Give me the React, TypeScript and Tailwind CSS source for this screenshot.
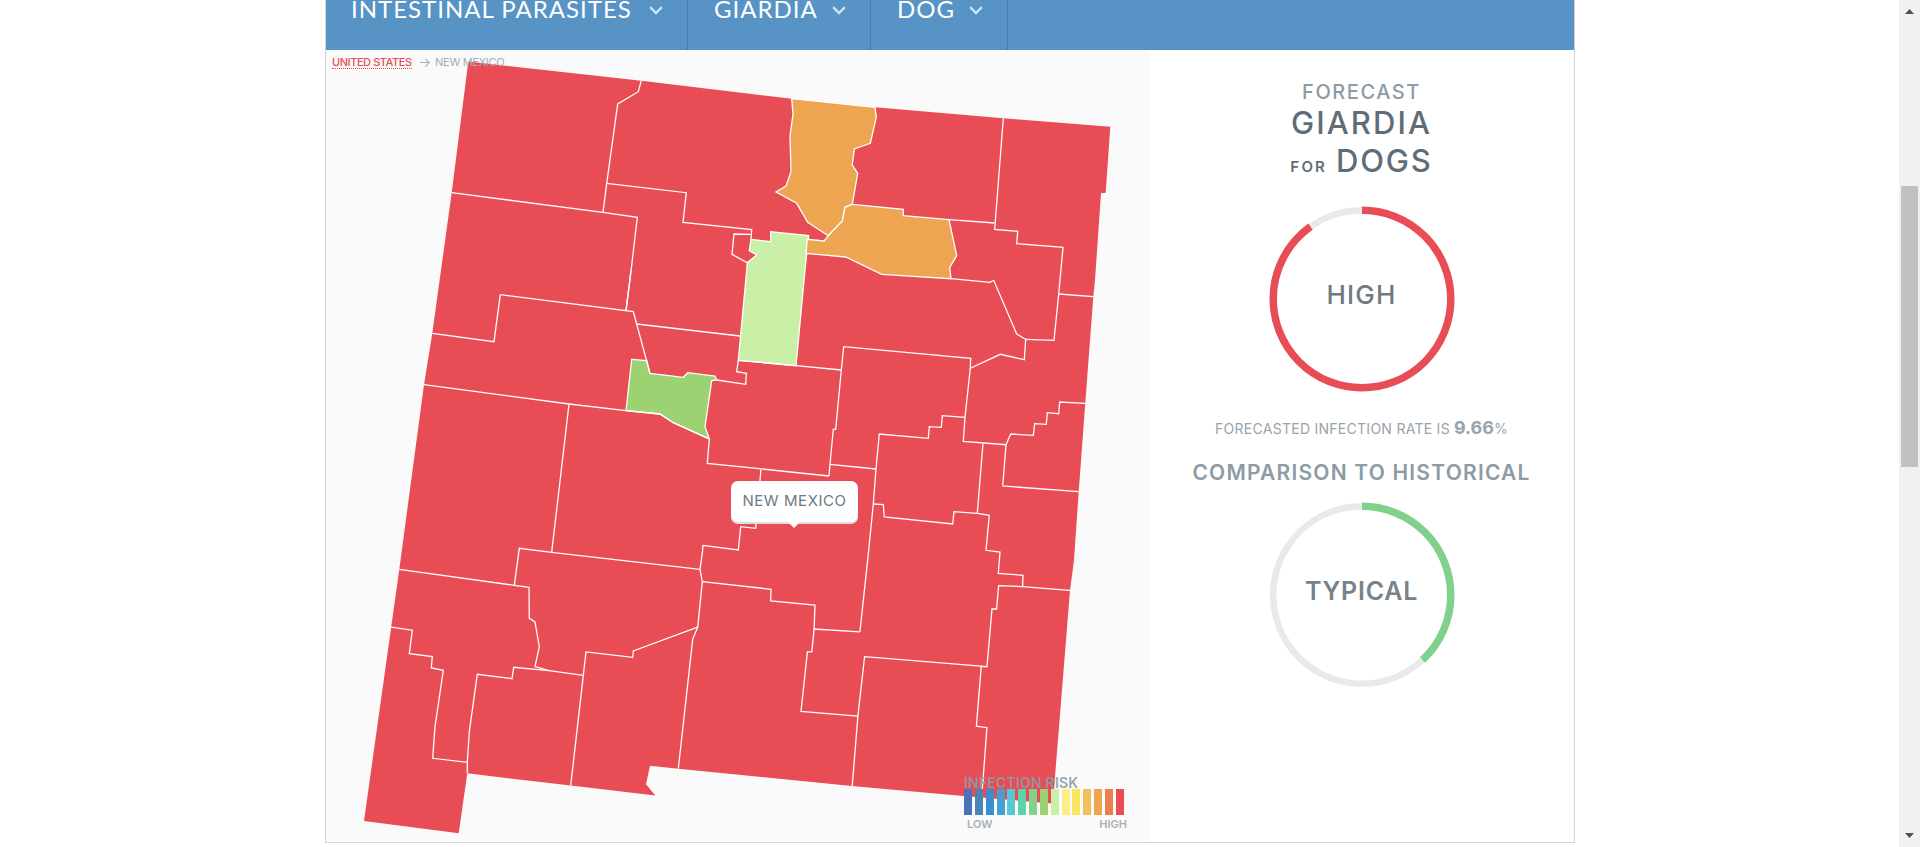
const MONT = "font-['Inter','Liberation_Sans',sans-serif]";

const fix = (s: string) =>
  s
    .split(" ")
    .map((p) => {
      const [x, y] = p.split(",").map(Number);
      return `${x},${y > 550 ? 550 + (y - 550) * 0.99 : y}`;
    })
    .join(" ");

const outline = fix(
  "468.3,61.5 641.3,80.7 791.7,98.7 875,107.3 1003.3,118.3 1110.3,126.7 1105.7,192.7 1101,193.3 1095,280 1093.3,296.7 1085.3,402.7 1078.7,491.7 1074,560 1070,591 1055,779 1053,806 963.3,798.5 851.7,788.4 678.3,770.9 650,767.9 646,786.7 655.3,798 570.7,788 467.3,775.6 458.7,836.2 364,823.7 399.3,569.5 424,384.7 432.3,333.3 451.7,192.7",
);

const lightGreen =
  "751,239.3 770.7,241.7 770.7,231.7 808.7,235.7 805,270 796,365.7 738.3,360.3 746.7,270 747.3,262.7 756.7,255 749.3,250.7";
const orangeN =
  "791.7,98.7 793,114 790,136 791,171.7 786,186 776,192 796.7,203.3 807.7,222.3 828.3,235.7 842.3,221 845,207.3 852.3,204.3 857.7,173.3 852.3,165 854.3,149 870.3,143.3 876.3,117.3 875,107.3";
const orangeS =
  "852.3,204.3 903.3,209.3 903.3,215.7 949,219.7 956.7,255.7 949.7,267.7 951,278.7 881.7,274.3 845.7,257 806,253.3 807.3,239.3 824,241 828.3,235.7 842.3,221 845,207.3";
const green =
  "631.7,359.3 646.7,360.7 650,373.3 683.3,377.3 687.7,372.7 715,376 716.7,380 711.7,380.7 705,426.7 709.3,439 673.3,422.7 660,414 626,410.7";

const lines = [
  "641.3,80.7 638.3,91.7 617.7,104 606.7,183.3 603,212.3",
  "451.7,192.7 603,212.3 637.3,217.3 630,280 626,310.7",
  "606.7,183.3 686.3,192.7 683,222.3 751.7,229.7 751,240",
  "750.7,234.3 734,234 732,254.3 747.3,262.7",
  "1003.3,118.3 994.7,229.3 1017.7,231.3 1016.7,243.7 1063,247.3 1058.7,294 1054,340.3 1025.7,339.3",
  "949,219.7 994.7,223",
  "1058.7,294 1093.3,296.7",
  "951,278.7 990,282.3 993.7,280.3 1016.7,334 1025.7,339.3 1024.3,359.7 1000.3,354.3 970.3,368.3 970.7,358.3 843.7,346.7 841.3,370 835.7,429.3 833.3,429.3 830,464.3 829,476",
  "796,365.7 841.3,370",
  "970.3,368.3 965,417.3 963.3,441.3 1006,444.7 1010.7,434 1033.3,435.3 1034.7,423.7 1046.3,424.3 1047.3,412.7 1058.7,413.7 1059.7,402 1085.3,403.3",
  "1006,444.7 1002.7,486 1078.7,491.7",
  "983,443.3 977.3,513.3",
  "965,417.3 942.3,415.7 941.3,427.3 929.3,426.7 928.3,438.3 879.3,434 876,469 873.3,504 867.7,560 859.9,632.8",
  "830,464.3 876,469",
  "873.3,504 883.3,504.7 884.3,517 952.7,524 954,511.7 977.3,513.3 989.3,515.3 986,550.3 1000,552 998.3,573.6 1023,575.6 1022.6,587 998.6,586 996.6,609.6 992,609.6 987,667.8 981.2,667.8 976.4,728 986.9,729.5 982.8,785.7 981,802",
  "1022.6,587 1072.7,591",
  "987,667.8 864.6,657.7 857.9,717.7 852.2,788.4",
  "857.9,717.7 801,713 807.4,653 811.8,653 814.1,629.8 859.9,632.8",
  "702.3,582 771,589.7 770.7,601.5 815,605.6 814.1,629.8",
  "702.7,545.3 702.7,550 700,569.5 702.3,582 697.7,628 692.7,640 678.3,770.9",
  "399.3,569.5 514.3,585.7 529,587.7 529.3,619 535,622.7 539.3,647.6 535,667.8 549,671.9",
  "514.3,585.7 519.3,548.3 551.7,552.3 700,569.5",
  "551.7,552.3 569,404",
  "424,384.7 569,404 626,410.7 660,414 673.3,422.7 709.3,439 707.3,463.3 829,476",
  "761,469.3 755.7,528.3 740.7,526.7 738.3,550 702.7,545.3",
  "716.7,380 745.7,384.3 746.3,373.3 736.7,371.7 738.3,360.3",
  "636.7,324 740,336",
  "500.3,294.7 494,341.7 432.3,333.3",
  "500.3,294.7 633.3,311.7 650,373.3",
  "626,310.7 631,270",
  "391,628 412.3,631 409.3,654.7 432.3,657.7 431.3,669.2 443.3,671.5 435,728.5 432.7,760.4 467.3,764.5 469.3,733.5 477.3,675.6 512,680 513.7,668.5 549,671.9 583.3,676.6 586,653 632.7,658.4 633.3,652 697.7,628",
  "583.3,676.6 570.7,788",
  "467.3,764.5 467.3,775.6",
  "796,365.7 738.3,360.3",
].map(fix);

const bars = [
  "bg-[#4a74b5]", "bg-[#4a86b5]", "bg-[#3d8bd0]", "bg-[#449fd3]", "bg-[#56c9d6]",
  "bg-[#5cd3a8]", "bg-[#7fd18b]", "bg-[#9dd272]", "bg-[#c9f0a6]", "bg-[#fbee84]",
  "bg-[#f6e660]", "bg-[#f0c158]", "bg-[#eda551]", "bg-[#e97f4b]", "bg-[#e84c55]",
];

function Chevron() {
  return (
    <svg width="14" height="9" viewBox="0 0 14 9" className="block">
      <path d="M1.2 1.2 7 7 12.8 1.2" fill="none" stroke="#d3e2ef" strokeWidth="2.4" />
    </svg>
  );
}

function NavItem({ label, className, gap }: { label: string; className: string; gap: string }) {
  return (
    <div className={`flex h-full items-start border-r border-[#487da8] ${className}`}>
      <span className="mt-[-7px] font-['Lato',sans-serif] text-[24px] leading-[32px] tracking-[1px] whitespace-nowrap text-white">
        {label}
      </span>
      <span className={`mt-[6px] ${gap}`}>
        <Chevron />
      </span>
    </div>
  );
}

function Ring({ pct, color, label, labelClass }: { pct: number; color: string; label: string; labelClass: string }) {
  const r = 88.8;
  const c = 2 * Math.PI * r;
  return (
    <div className="grid h-[186px] w-[186px] place-items-center">
      <svg width="186" height="186" viewBox="0 0 186 186" className="block [grid-area:1/1]">
        <circle cx="93" cy="93" r={r} fill="none" stroke="#e9e9e9" strokeWidth="6.5" />
        <circle
          cx="93"
          cy="93"
          r={r}
          fill="none"
          stroke={color}
          strokeWidth="7.5"
          strokeDasharray={`${(c * pct) / 100} ${c}`}
          transform="rotate(-90 93 93)"
        />
      </svg>
      <span className={`[grid-area:1/1] ${labelClass}`}>{label}</span>
    </div>
  );
}

export default function App() {
  return (
    <div className="flex h-[847px] w-full overflow-hidden bg-white">
      <div className="min-w-0 flex-1">
        <div className="ml-[325px] box-border flex h-[843px] w-[1250px] flex-col border-x border-b border-[#d4d4d4]">
          <div className="flex h-[50px] shrink-0 overflow-hidden bg-[#5893c6]">
            <NavItem label="INTESTINAL PARASITES" className="w-[362px] pl-[25px]" gap="ml-[17px]" />
            <NavItem label="GIARDIA" className="w-[183px] pl-[26px]" gap="ml-[14px]" />
            <NavItem label="DOG" className="w-[137px] pl-[26px]" gap="ml-[14px]" />
          </div>
          <div className="flex min-h-0 flex-1">
            <div className="relative w-[823px] shrink-0 bg-[#fafafa]">
              <svg width="823" height="792" viewBox="326 50 823 792" className="block">
                <polygon points={outline} fill="#e84c55" />
                <polygon points={lightGreen} fill="#c9f0a6" stroke="#fff" strokeWidth="1.3" />
                <polygon points={orangeN} fill="#eda551" stroke="#fff" strokeWidth="1.3" />
                <polygon points={orangeS} fill="#eda551" stroke="#fff" strokeWidth="1.3" />
                <polygon points={green} fill="#9dd272" stroke="#fff" strokeWidth="1.3" />
                {lines.map((p) => (
                  <polyline key={p} points={p} fill="none" stroke="#fff" strokeWidth="1.3" />
                ))}
              </svg>

              <div className={`absolute left-[6px] top-[5px] flex items-center text-[11px] leading-[14px] ${MONT}`}>
                <span className="border-b border-dotted border-[#e84c55] font-medium leading-[12px] tracking-[-0.43px] text-[#e84c55]">
                  UNITED STATES
                </span>
                <span className="ml-[7px] text-[13px] text-[#a3adb3]">→</span>
                <span className="ml-[4px] tracking-[-0.3px] text-[#a3adb3]">NEW MEXICO</span>
              </div>

              <div className="absolute left-[405px] top-[431px] flex h-[41px] w-[127px] items-center justify-center rounded-[7px] bg-white shadow-[0_2px_0_#dedede]">
                <span className={`text-[15px] tracking-[0.55px] text-[#6c7a84] ${MONT}`}>NEW MEXICO</span>
                <span className="absolute bottom-[-4px] left-[58px] h-[10px] w-[10px] rotate-45 bg-white" />
              </div>

              <div className={`absolute left-[638px] top-[725px] w-[166px] ${MONT}`}>
                <div className="text-[14px] font-semibold leading-[16px] tracking-[0.2px] whitespace-nowrap text-[#8f9ca5] opacity-90">
                  INFECTION RISK
                </div>
                <div className="mt-[-2px] flex h-[26px] w-[160px] justify-between">
                  {bars.map((b) => (
                    <div key={b} className={`h-full w-[8px] ${b}`} />
                  ))}
                </div>
                <div className="mt-[3px] flex justify-between pl-[3px] pr-[3px] text-[11px] font-semibold leading-[13px] text-[#a7b0b7]">
                  <span>LOW</span>
                  <span>HIGH</span>
                </div>
              </div>
            </div>

            <div className={`flex min-w-0 flex-1 flex-col items-center ${MONT}`}>
              <div className="mt-[32px] text-[20px] font-medium leading-[20px] tracking-[1.55px] text-[#8d9ba5]">
                FORECAST
              </div>
              <div className="mt-[3px] text-[31px] font-medium leading-[36px] tracking-[2.1px] text-[#5f6d78]">
                GIARDIA
              </div>
              <div className="mt-[2px] flex items-baseline gap-[9px] leading-[36px] text-[#5f6d78]">
                <span className="text-[15px] font-semibold tracking-[2.2px]">FOR</span>
                <span className="text-[31px] font-medium tracking-[1.8px]">DOGS</span>
              </div>
              <div className="mt-[21px]">
                <Ring
                  pct={90}
                  color="#e84c55"
                  label="HIGH"
                  labelClass="mb-[10px] text-[26px] font-medium tracking-[1.2px] text-[#6e7a83]"
                />
              </div>
              <div className="mt-[25px] flex h-[22px] items-baseline text-[14px] leading-[22px] tracking-[0.27px] text-[#98a3ab]">
                <span>FORECASTED INFECTION RATE IS</span>
                <span className="ml-[4px] text-[18px] font-bold tracking-[0px] text-[#98a3ab]">9.66</span>
                <span>%</span>
              </div>
              <div className="mt-[21px] text-[21px] font-semibold leading-[26px] tracking-[1.2px] whitespace-nowrap text-[#8d9ba5]">
                COMPARISON TO HISTORICAL
              </div>
              <div className="mt-[16px]">
                <Ring
                  pct={38}
                  color="#7fd18b"
                  label="TYPICAL"
                  labelClass="mb-[7px] text-[25px] font-semibold tracking-[0.75px] text-[#77828a]"
                />
              </div>
            </div>
          </div>
        </div>
      </div>

      <div className="flex h-full w-[21px] shrink-0 flex-col items-center bg-[#f1f1f1]">
        <svg width="9" height="5" viewBox="0 0 9 5" className="mt-[9px] block">
          <polygon points="4.5,0 9,5 0,5" fill="#505050" />
        </svg>
        <div className="mt-[172px] h-[281px] w-[17px] bg-[#c1c1c1]" />
        <svg width="9" height="5" viewBox="0 0 9 5" className="mt-auto mb-[9px] block">
          <polygon points="0,0 9,0 4.5,5" fill="#505050" />
        </svg>
      </div>
    </div>
  );
}
